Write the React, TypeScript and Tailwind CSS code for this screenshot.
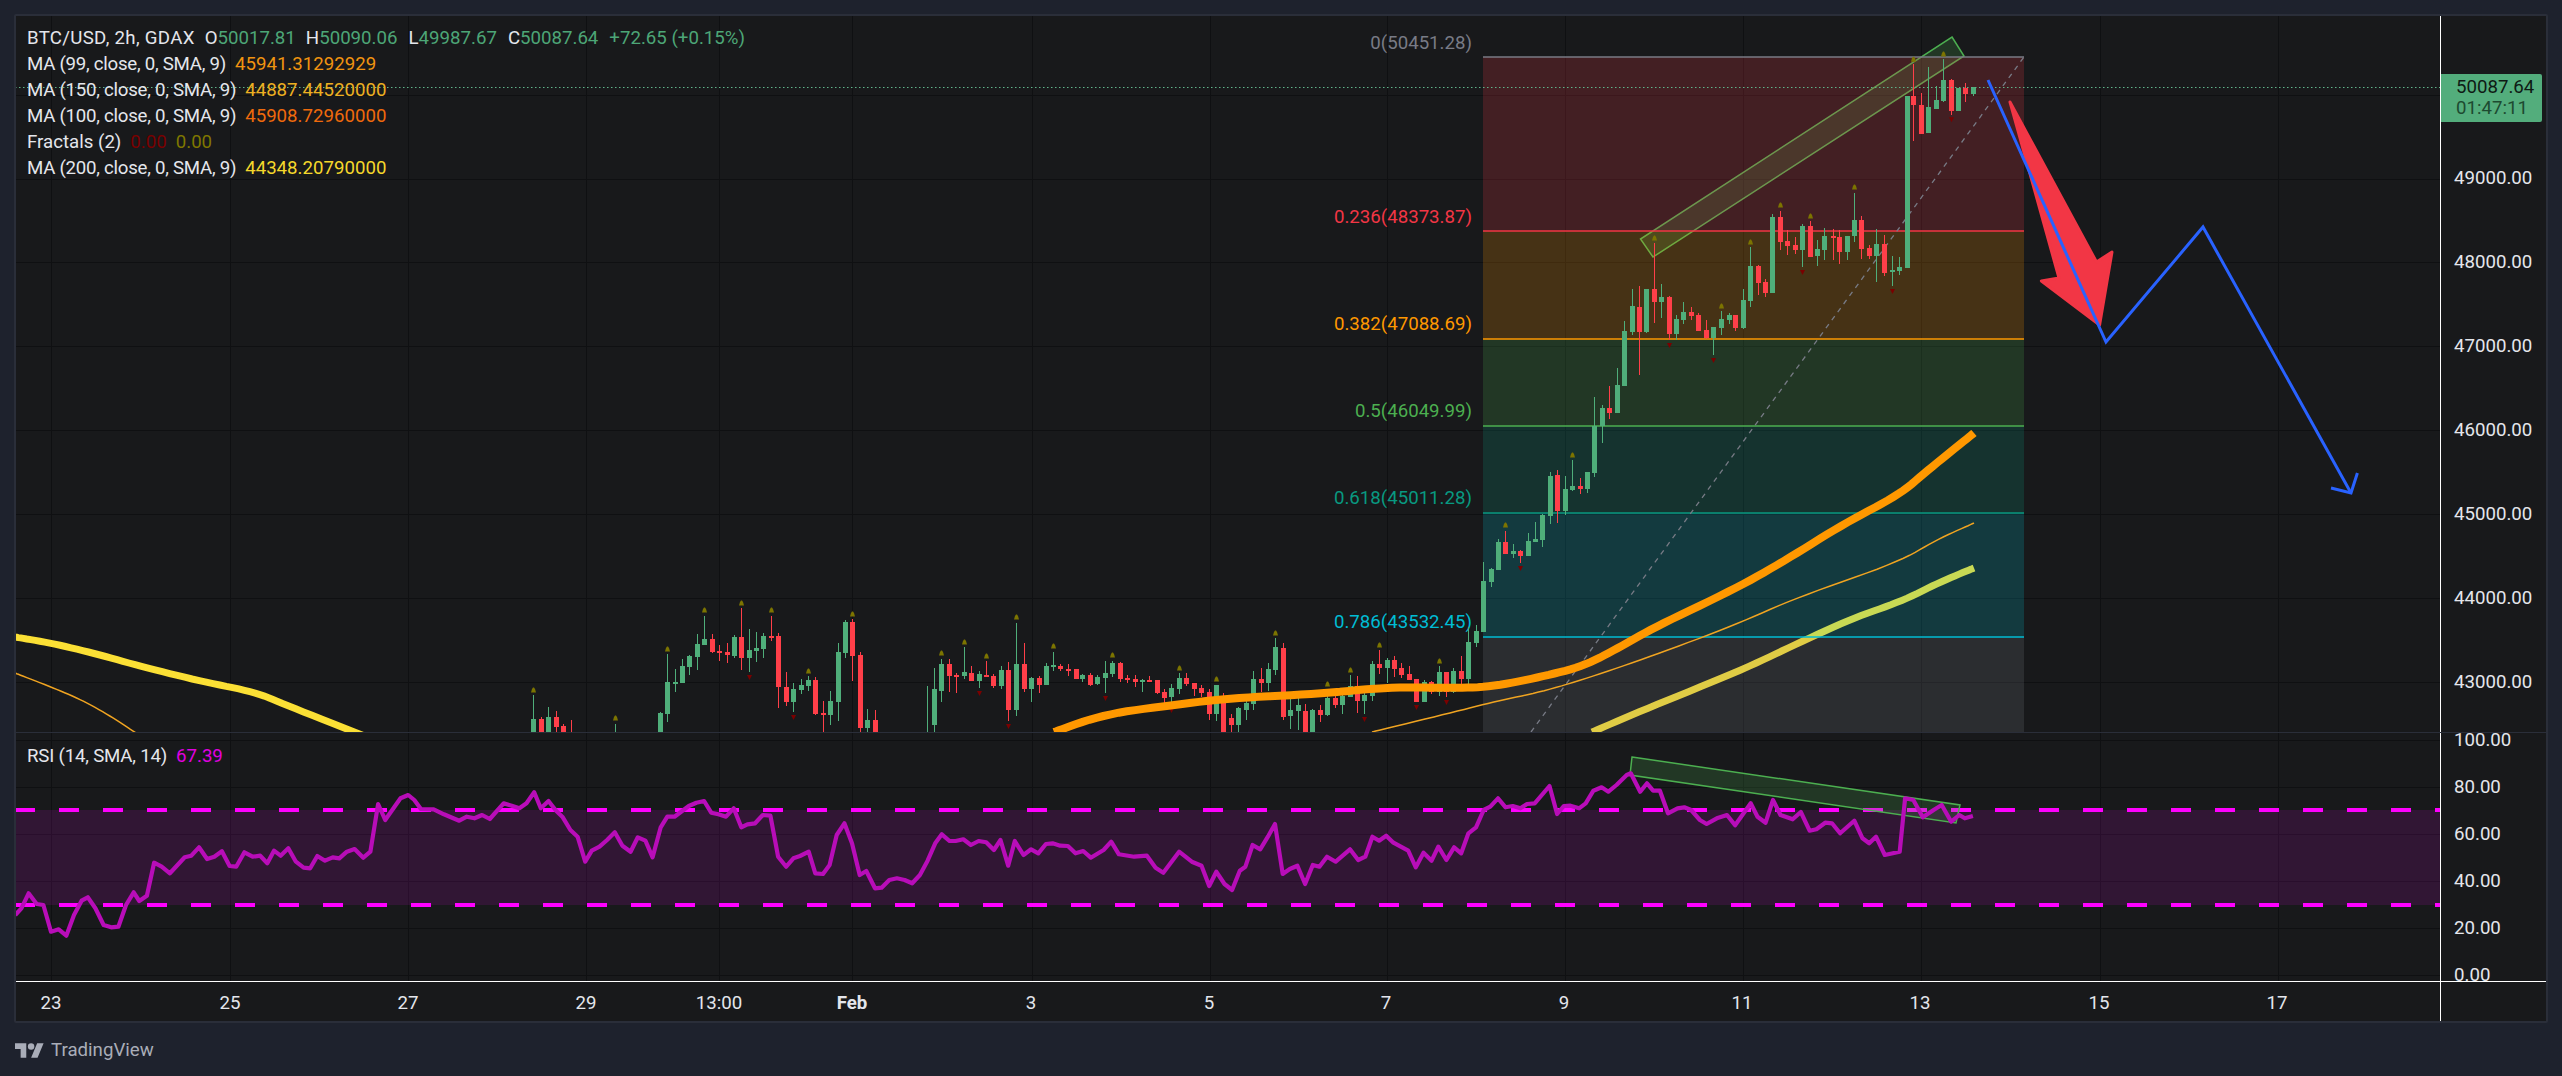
import React from 'react';

// [x, isUp, bodyTop, bodyBottom, wickTop, wickBottom, fractalUpY, fractalDownY]
type Candle = number[];

// candles were read off crops of the chart, each crop has its own scale
const fromCrop = (rows: Candle[], x0: number, sx: number, y0: number, sy: number): Candle[] =>
  rows.map(([x, up, bt, bb, wt, wb, fu = 0, fd = 0]) => [
    Math.round(x0 + x / sx),
    up,
    y0 + bt / sy,
    y0 + bb / sy,
    y0 + wt / sy,
    y0 + wb / sy,
    fu ? y0 + fu / sy : 0,
    fd ? y0 + fd / sy : 0,
  ]);

const candlesA = fromCrop(
  [
    [40, 1, 372, 430, 300, 430, 285], [64, 0, 372, 430, 366, 430], [85, 1, 366, 430, 336, 430],
    [109, 0, 366, 396, 348, 430], [130, 0, 393, 430, 387, 430], [154, 0, 450, 460, 375, 430],
    [286, 1, 450, 460, 387, 430, 369], [421, 1, 354, 430, 351, 430], [442, 1, 261, 357, 177, 381, 162],
    [464, 1, 261, 264, 222, 291], [487, 1, 213, 264, 192, 264], [508, 1, 183, 216, 180, 240],
    [532, 1, 147, 186, 117, 225], [553, 1, 132, 150, 63, 150, 45], [575, 0, 132, 171, 117, 174],
    [598, 0, 168, 174, 150, 198], [620, 0, 171, 180, 144, 204], [643, 1, 126, 183, 120, 189],
    [664, 0, 126, 189, 39, 225, 24], [688, 1, 165, 189, 102, 231, 0, 246], [709, 1, 159, 168, 111, 201],
    [730, 1, 123, 162, 114, 189], [754, 0, 123, 126, 63, 138, 45], [775, 0, 123, 276, 114, 339],
    [799, 0, 276, 321, 231, 333], [820, 1, 282, 321, 264, 351, 0, 366], [844, 1, 270, 285, 252, 297],
    [865, 1, 255, 273, 243, 288, 228], [886, 0, 255, 357, 246, 360], [910, 0, 354, 360, 318, 430],
    [931, 1, 318, 360, 288, 390], [955, 1, 171, 321, 144, 378], [976, 1, 81, 174, 75, 189],
    [997, 0, 81, 183, 72, 258, 57], [1021, 0, 180, 399, 171, 430], [1042, 1, 375, 399, 342, 430],
    [1066, 0, 375, 430, 345, 430], [1222, 1, 450, 460, 273, 430], [1243, 1, 282, 390, 219, 430],
    [1264, 1, 207, 288, 192, 321, 174], [1288, 0, 207, 243, 192, 291], [1309, 0, 240, 243, 234, 294],
    [1333, 1, 231, 243, 156, 252, 141], [1354, 0, 234, 258, 213, 258], [1378, 1, 237, 258, 228, 279, 0, 294],
    [1399, 0, 240, 246, 198, 246, 183], [1420, 0, 243, 273, 237, 279], [1444, 1, 225, 273, 213, 282],
    [1465, 0, 225, 345, 201, 378, 0, 393], [1489, 1, 207, 345, 84, 363, 66],
  ],
  520, 3, 595, 3,
);

const candlesB = fromCrop(
  [
    [41, 0, 207, 282, 144, 291], [64, 1, 249, 282, 246, 321], [86, 0, 249, 270, 243, 294],
    [107, 1, 213, 270, 204, 270], [130, 1, 210, 216, 171, 228, 153], [151, 0, 213, 222, 207, 228],
    [175, 0, 222, 225, 207, 243], [197, 0, 222, 252, 222, 252], [217, 1, 240, 252, 237, 261],
    [241, 0, 240, 270, 234, 273], [262, 1, 246, 267, 240, 270], [286, 1, 234, 249, 198, 294, 0, 309],
    [307, 1, 204, 237, 198, 246, 180], [331, 0, 204, 252, 201, 261], [352, 0, 249, 255, 240, 264],
    [374, 0, 252, 261, 240, 276], [397, 1, 255, 261, 252, 291], [418, 0, 255, 258, 243, 261],
    [442, 0, 255, 294, 255, 297], [463, 0, 291, 309, 282, 327], [484, 1, 279, 306, 267, 324, 0, 345],
    [508, 1, 249, 282, 234, 297, 219], [529, 0, 249, 267, 234, 273], [553, 0, 264, 282, 264, 303],
    [574, 0, 279, 294, 270, 306], [598, 0, 291, 357, 282, 375], [619, 1, 270, 357, 270, 378, 252],
    [640, 0, 321, 430, 294, 430], [664, 0, 369, 390, 357, 430], [685, 1, 339, 390, 336, 430],
    [709, 1, 324, 345, 318, 375], [730, 1, 252, 327, 228, 345], [754, 0, 252, 264, 219, 291],
    [775, 1, 222, 264, 204, 288], [796, 1, 156, 225, 129, 240, 114], [820, 0, 159, 366, 144, 375],
    [841, 1, 345, 363, 312, 402], [865, 1, 330, 348, 306, 405], [886, 0, 348, 430, 327, 430],
    [907, 1, 345, 430, 342, 430], [931, 0, 345, 360, 330, 381], [952, 1, 309, 360, 282, 363, 267],
    [976, 0, 309, 330, 300, 339], [997, 1, 303, 330, 282, 357], [1021, 1, 273, 306, 240, 306, 225],
    [1042, 0, 273, 318, 243, 354], [1063, 1, 300, 318, 279, 357, 0, 372], [1087, 1, 207, 303, 198, 318],
    [1108, 0, 207, 219, 165, 237, 150], [1132, 1, 195, 219, 189, 264], [1153, 0, 195, 222, 183, 246],
    [1174, 0, 219, 240, 204, 249], [1198, 0, 237, 255, 213, 255], [1219, 0, 252, 321, 252, 321, 0, 336],
    [1243, 1, 261, 321, 255, 321], [1264, 0, 261, 291, 258, 297], [1288, 1, 231, 291, 213, 303, 198],
    [1309, 0, 231, 291, 231, 306, 0, 321], [1330, 1, 228, 291, 219, 294], [1354, 0, 228, 252, 183, 273],
    [1375, 1, 141, 252, 96, 267], [1399, 1, 108, 144, 90, 156],
  ],
  1010, 3, 595, 3,
);

const candlesC = fromCrop(
  [
    [130, 1, 543, 696, 486, 696], [154, 1, 507, 546, 504, 561], [175, 1, 426, 510, 417, 510],
    [196, 0, 426, 462, 393, 462, 375], [220, 1, 453, 462, 432, 474], [241, 0, 453, 468, 450, 489, 0, 504],
    [265, 1, 423, 468, 399, 468], [286, 1, 417, 426, 366, 426], [307, 1, 345, 420, 342, 441],
    [331, 1, 228, 348, 216, 372], [352, 0, 225, 333, 210, 369], [376, 1, 267, 333, 228, 345],
    [397, 1, 258, 270, 180, 273, 165], [421, 0, 258, 267, 234, 282], [442, 1, 216, 267, 216, 279],
    [463, 1, 79, 219, -9, 231], [487, 1, 24, 79, 15, 129], [508, 0, 24, 39, -42, 57],
  ],
  1440, 3, 400, 3,
);

const candlesD = fromCrop(
  [
    [423, 1, 1155, 1240, 1104, 1240], [441, 1, 993, 1158, 963, 1158], [460, 1, 918, 995, 867, 1005],
    [479, 0, 921, 996, 858, 1124], [497, 1, 867, 996, 867, 1000], [517, 0, 867, 906, 729, 970, 714],
    [535, 1, 891, 906, 852, 954], [555, 0, 891, 1002, 888, 1020, 0, 1035], [573, 1, 957, 1002, 945, 1020],
    [590, 1, 936, 960, 906, 972], [610, 0, 936, 948, 921, 960], [628, 0, 945, 993, 939, 993],
    [648, 0, 990, 1014, 960, 1017], [666, 1, 981, 1014, 981, 1065, 0, 1080], [686, 1, 957, 984, 933, 1005, 918],
    [705, 1, 945, 960, 939, 972], [722, 0, 945, 984, 945, 993], [742, 1, 900, 984, 867, 987],
    [760, 1, 798, 903, 741, 921, 726], [780, 0, 798, 849, 795, 885], [798, 0, 846, 879, 837, 891],
    [815, 1, 651, 879, 642, 879], [835, 0, 651, 726, 633, 750, 615], [853, 0, 723, 738, 690, 765],
    [873, 0, 735, 750, 711, 762], [891, 1, 678, 750, 672, 801, 0, 816], [911, 0, 678, 771, 663, 771, 648],
    [929, 1, 747, 768, 720, 798], [947, 1, 708, 750, 684, 780], [968, 0, 708, 714, 687, 780],
    [985, 0, 711, 756, 690, 792], [1005, 1, 708, 756, 708, 780], [1023, 1, 660, 708, 579, 726, 561],
    [1041, 0, 660, 747, 648, 777], [1060, 0, 744, 768, 735, 777], [1078, 1, 732, 768, 687, 846],
    [1099, 0, 732, 819, 705, 828], [1117, 1, 810, 816, 768, 858, 0, 873], [1136, 1, 801, 813, 771, 825],
    [1155, 1, 288, 804, 288, 804], [1172, 0, 288, 315, 192, 423, 178], [1192, 0, 315, 402, 279, 402],
    [1210, 1, 321, 399, 201, 399], [1230, 1, 300, 327, 258, 327], [1248, 1, 240, 303, 177, 306, 162],
    [1268, 0, 240, 333, 237, 345, 0, 358], [1286, 1, 264, 333, 264, 333], [1303, 0, 264, 282, 249, 306],
    [1324, 1, 261, 282, 261, 288],
  ],
  1450, 2.53, 0, 3,
);

const candles = [...candlesA, ...candlesB, ...candlesC, ...candlesD];

const gridX = [51, 230, 408, 586, 719, 852, 1032, 1210, 1387, 1565, 1743, 1921, 2100, 2278];
const gridY = [95, 179, 262, 346, 430, 514, 598, 682];
const rsiGridY = [740, 787, 834, 881, 928, 975];

const fib = [
  { top: 57, bottom: 231, color: '#787b86', fill: '#f23645', label: '0(50451.28)', labelY: 43 },
  { top: 231, bottom: 339, color: '#f23645', fill: '#ff9800', label: '0.236(48373.87)', labelY: 217 },
  { top: 339, bottom: 426, color: '#ff9800', fill: '#4caf50', label: '0.382(47088.69)', labelY: 324 },
  { top: 426, bottom: 513, color: '#4caf50', fill: '#089981', label: '0.5(46049.99)', labelY: 411 },
  { top: 513, bottom: 637, color: '#089981', fill: '#00bcd4', label: '0.618(45011.28)', labelY: 498 },
  { top: 637, bottom: 740, color: '#00bcd4', fill: '#787b86', label: '0.786(43532.45)', labelY: 622 },
];

// corner cutting so the moving averages don't look like straight segments
const smooth = (line: string, rounds = 3) => {
  let pts = line.split(' ').map((p) => p.split(',').map(Number));
  for (let r = 0; r < rounds; r++) {
    const next = [pts[0]];
    for (let i = 0; i < pts.length - 1; i++) {
      const [a, b] = [pts[i], pts[i + 1]];
      next.push([a[0] * 0.75 + b[0] * 0.25, a[1] * 0.75 + b[1] * 0.25]);
      next.push([a[0] * 0.25 + b[0] * 0.75, a[1] * 0.25 + b[1] * 0.75]);
    }
    next.push(pts[pts.length - 1]);
    pts = next;
  }
  return pts.map((p) => p.map((n) => n.toFixed(1)).join(',')).join(' ');
};

const ma99 = smooth(
  '1054,732 1105,714 1174,705 1231,698 1318,694 1389,687 1450,688 1490,687 1541,677 1584,666 1620,647 1655,627 1735,589 1786,560 1845,523 1899,495 1928,470 1974,433',
);
const ma150 = smooth(
  '1372,732 1450,713 1497,701 1541,692 1588,678 1652,656 1735,625 1798,597 1899,562 1936,540 1974,523',
);
const ma200Right = smooth('1592,732 1648,708 1742,670 1790,647 1853,618 1900,602 1940,582 1974,568');
const ma200Left = smooth('15,637 51,643 97,654 143,667 204,682 255,692 286,705 367,737');
const ma150Left = smooth('15,673 51,687 82,700 112,717 139,735');

const toPoints = (rows: number[][], x0: number, sx: number, y0: number) =>
  rows.map(([x, y]) => `${(x0 + x / sx).toFixed(1)},${(y0 + y / 3).toFixed(1)}`).join(' ');

const rsiPoints = [
  toPoints(
    [
      [30, 585], [42, 565], [56, 520], [72, 552], [85, 555], [100, 635], [115, 628], [130, 647], [145, 585], [160, 542],
      [172, 532], [187, 565], [203, 615], [218, 622], [232, 620], [247, 555], [262, 517], [273, 543], [288, 527], [302, 428],
      [317, 440], [333, 460], [362, 412], [375, 407], [390, 382], [406, 417], [420, 410], [435, 394], [450, 438], [463, 440],
      [479, 397], [495, 410], [510, 407], [524, 430], [537, 392], [550, 407], [565, 385], [580, 425], [595, 443], [608, 445],
      [622, 408], [637, 422], [652, 412], [665, 415], [680, 395], [695, 387], [712, 413], [726, 395], [741, 252], [755, 300],
      [785, 235], [800, 225], [812, 240], [825, 267], [850, 268], [870, 283], [900, 302], [915, 290], [930, 295], [945, 285],
      [960, 297], [987, 250], [1003, 257], [1018, 265], [1032, 250], [1047, 217], [1060, 265], [1075, 243], [1090, 272], [1103, 292],
      [1118, 330], [1132, 350], [1147, 425], [1160, 392], [1175, 380], [1190, 360], [1205, 337], [1220, 377], [1236, 395], [1250, 352],
      [1265, 362], [1279, 412], [1295, 322], [1308, 290], [1322, 290], [1350, 258], [1365, 248], [1380, 243], [1394, 278], [1408, 283],
      [1423, 290], [1438, 265], [1453, 322], [1465, 313], [1480, 310], [1495, 285], [1510, 287], [1525, 410], [1541, 440], [1555, 415],
    ],
    0, 1.96, 720,
  ),
  toPoints(
    [
      [0, 408], [17, 395], [30, 460], [45, 462], [58, 435], [72, 345], [87, 310], [102, 370], [117, 465], [130, 453],
      [147, 505], [160, 503], [175, 480], [190, 475], [205, 480], [220, 490], [235, 465], [250, 422], [265, 370], [278, 343],
      [293, 363], [305, 363], [320, 358], [335, 375], [350, 363], [365, 367], [380, 390], [393, 360], [408, 437], [421, 363],
      [438, 405], [453, 388], [467, 400], [482, 372], [495, 370], [510, 377], [525, 378], [540, 400], [555, 393], [570, 413],
      [595, 390], [610, 365], [625, 403], [655, 410], [680, 407], [697, 443], [712, 458], [743, 395], [768, 425], [787, 437],
      [802, 498], [816, 455], [832, 492], [847, 510], [862, 452], [873, 440], [887, 375], [902, 388], [917, 350], [931, 312],
      [946, 462], [960, 447], [975, 437], [990, 492], [1005, 435], [1018, 440], [1033, 410], [1050, 425], [1078, 388], [1094, 420],
      [1108, 410], [1122, 350], [1135, 362], [1149, 347], [1163, 368], [1192, 392], [1207, 442], [1222, 398], [1238, 422], [1251, 380],
      [1267, 420], [1282, 382], [1296, 400], [1310, 340], [1325, 322], [1340, 270], [1353, 260], [1368, 235], [1383, 262], [1397, 258],
      [1412, 265], [1425, 252], [1440, 250], [1469, 198], [1484, 282], [1497, 258], [1510, 257], [1527, 265], [1540, 250], [1555, 212],
    ],
    800, 1.96, 720,
  ),
  toPoints(
    [
      [150, 262], [160, 275], [172, 255], [187, 225], [193, 220], [207, 275], [217, 250], [226, 272], [236, 272], [248, 340],
      [262, 325], [272, 322], [282, 330], [295, 360], [305, 372], [320, 355], [335, 345], [347, 376], [370, 310], [380, 350],
      [392, 368], [403, 300], [414, 345], [432, 358], [444, 336], [457, 392], [467, 388], [480, 368], [490, 370], [502, 400],
      [523, 362], [535, 415], [545, 430], [555, 410], [568, 465], [590, 455], [598, 295], [610, 300], [624, 352], [640, 330],
      [652, 315], [666, 365], [678, 345], [686, 355], [698, 348],
    ],
    1500, 1.476, 700,
  ),
].join(' ');

const timeLabels = [
  { text: '23', x: 51 }, { text: '25', x: 230 }, { text: '27', x: 408 }, { text: '29', x: 586 },
  { text: '13:00', x: 719 }, { text: 'Feb', x: 852, bold: true }, { text: '3', x: 1031 }, { text: '5', x: 1209 },
  { text: '7', x: 1386 }, { text: '9', x: 1564 }, { text: '11', x: 1742 }, { text: '13', x: 1920 },
  { text: '15', x: 2099 }, { text: '17', x: 2277 },
];

const maLegend = [
  { name: 'MA (99, close, 0, SMA, 9)', value: '45941.31292929', color: 'text-[#f09410]' },
  { name: 'MA (150, close, 0, SMA, 9)', value: '44887.44520000', color: 'text-[#edb021]' },
  { name: 'MA (100, close, 0, SMA, 9)', value: '45908.72960000', color: 'text-[#ef6a0c]' },
];

function GridLines({ ys, y1, y2 }: { ys: number[]; y1: number; y2: number }) {
  return (
    <g stroke="#0f1012" strokeWidth="1" shapeRendering="crispEdges">
      {gridX.map((x) => (
        <line key={x} x1={x} x2={x} y1={y1} y2={y2} />
      ))}
      {ys.map((y) => (
        <line key={y} x1={15} x2={2440} y1={y} y2={y} />
      ))}
    </g>
  );
}

function Candles() {
  return (
    <g>
      {candles.map(([x, up, bt, bb, wt, wb, fu, fd], i) => {
        const color = up ? '#4fae7a' : '#ff3f49';
        return (
          <g key={i} fill={color}>
            <rect x={x} y={wt} width="1" height={wb - wt} shapeRendering="crispEdges" />
            <rect x={x - 2} y={bt} width="5" height={Math.max(bb - bt, 1.5)} shapeRendering="crispEdges" />
            {fu > 0 && <path d={`M${x - 2} ${fu + 2.5}h5l-1-3.5-1-1.5h-1l-1 1.5z`} fill="#7c7400" />}
            {fd > 0 && <path d={`M${x - 2} ${fd - 2}h5l-2.5 5z`} fill="#7a0000" />}
          </g>
        );
      })}
    </g>
  );
}

function MainChart() {
  return (
    <svg width="2424" height="716" viewBox="16 16 2424 716" className="block">
      <GridLines ys={gridY} y1={16} y2={732} />
      <polyline points={ma200Left} fill="none" stroke="#fbe035" strokeWidth="7" />
      <polyline points={ma150Left} fill="none" stroke="#f0a421" strokeWidth="1.5" />
      <polyline points={ma200Right} fill="none" stroke="#fbe035" strokeWidth="7" />
      <polygon
        points="1952,37 1964,56 1653,257 1640.5,239"
        fill="#4caf50"
        fillOpacity="0.2"
        stroke="#4caf50"
        strokeWidth="1.5"
      />
      {fib.map((f) => (
        <g key={f.label}>
          <rect x="1483" y={f.top} width="541" height={f.bottom - f.top} fill={f.fill} fillOpacity="0.2" />
          <line x1="1483" x2="2024" y1={f.top} y2={f.top} stroke={f.color} strokeWidth="1.5" />
          <text x="1472" y={f.labelY + 6} textAnchor="end" fontSize="18.67" fill={f.color}>
            {f.label}
          </text>
        </g>
      ))}
      <line x1="1531" y1="732" x2="2024" y2="57" stroke="#787b86" strokeWidth="1.3" strokeDasharray="5 5" />
      <Candles />
      <polyline points={ma150} fill="none" stroke="#f0a421" strokeWidth="1.5" />
      <polyline points={ma99} fill="none" stroke="#ff9800" strokeWidth="8" />
      <line x1="15" x2="2440" y1="87.5" y2="87.5" stroke="#5fb48a" strokeWidth="1" strokeDasharray="1.5 2.5" />
      <path
        d="M2010 102 L2096.5 262 L2112 252 L2099.6 325 L2041.4 281 L2059 278 Z"
        fill="#f23645"
        stroke="#f23645"
        strokeWidth="3"
        strokeLinejoin="round"
      />
      <polyline
        points="1988,80 2106,342 2203,227 2351,493"
        fill="none"
        stroke="#2962ff"
        strokeWidth="3"
        strokeLinejoin="miter"
      />
      <polyline points="2331,488 2351,493 2357.4,473" fill="none" stroke="#2962ff" strokeWidth="3" />
    </svg>
  );
}

function RsiChart() {
  return (
    <svg width="2424" height="248" viewBox="16 733 2424 248" className="block">
      <GridLines ys={rsiGridY} y1={733} y2={981} />
      <rect x="15" y="810" width="2425" height="95" fill="#ff00ff" fillOpacity="0.11" />
      <line x1="15" x2="2440" y1="810" y2="810" stroke="#ff00ff" strokeWidth="4" strokeDasharray="20 24" />
      <line x1="15" x2="2440" y1="905" y2="905" stroke="#ff00ff" strokeWidth="4" strokeDasharray="20 24" />
      <polygon
        points="1632,757 1960,805 1956,823 1630,775"
        fill="#4caf50"
        fillOpacity="0.2"
        stroke="#4caf50"
        strokeWidth="1.5"
      />
      <polyline points={rsiPoints} fill="none" stroke="#b80db8" strokeWidth="4.2" strokeLinejoin="round" />
    </svg>
  );
}

function PriceTag() {
  return (
    <div className="absolute left-0 top-[58px] flex h-[48px] w-[101px] flex-col rounded-r-[2px] bg-[#53ad7c] pl-[15px] leading-[21px]">
      <span className="mt-[3px] text-[#0e1a14]">50087.64</span>
      <span className="text-[#1d4a30]">01:47:11</span>
    </div>
  );
}

export default function App() {
  return (
    <div className="flex h-[1076px] w-[2562px] flex-col overflow-hidden bg-[#1e222d] px-[14px] pt-[14px] text-[18.67px] [font-family:Roboto,'Liberation_Sans',sans-serif]">
      <div className="flex h-[1009px] w-[2534px] flex-col rounded-[2px] border-2 border-[#2a2e39] bg-[#18191b] text-[#e4e6ec]">
        {/* price pane */}
        <div className="flex h-[716px]">
          <div className="relative w-[2424px]">
            <MainChart />
            <div className="absolute left-[11px] top-[9px] flex flex-col leading-[26px]">
              <div className="flex">
                <span className="tracking-[0.3px]">BTC/USD, 2h, GDAX</span>
                <span className="ml-[10px]">O</span>
                <span className="text-[#4da677]">50017.81</span>
                <span className="ml-[10px]">H</span>
                <span className="text-[#4da677]">50090.06</span>
                <span className="ml-[11px]">L</span>
                <span className="text-[#4da677]">49987.67</span>
                <span className="ml-[11px]">C</span>
                <span className="text-[#4da677]">50087.64</span>
                <span className="ml-[11px] text-[#4da677]">+72.65 (+0.15%)</span>
              </div>
              {maLegend.map((m) => (
                <div key={m.name} className="flex gap-[9px]">
                  <span className="tracking-[-0.26px]">{m.name}</span>
                  <span className={m.color}>{m.value}</span>
                </div>
              ))}
              <div className="flex gap-[9px]">
                <span>Fractals (2)</span>
                <span className="text-[#7a0000]">0.00</span>
                <span className="text-[#7f7700]">0.00</span>
              </div>
              <div className="flex gap-[9px]">
                <span className="tracking-[-0.26px]">MA (200, close, 0, SMA, 9)</span>
                <span className="text-[#f5d82b]">44348.20790000</span>
              </div>
            </div>
          </div>
          <div className="relative flex w-[106px] flex-col border-l border-white pl-[13px] pt-[120px]">
            {['49000.00', '48000.00', '47000.00', '46000.00', '45000.00', '44000.00', '43000.00'].map((p) => (
              <div key={p} className="flex h-[84px] shrink-0 items-center">
                {p}
              </div>
            ))}
            <PriceTag />
          </div>
        </div>

        {/* rsi pane */}
        <div className="flex h-[249px] border-t border-[#2a2e39]">
          <div className="relative w-[2424px]">
            <RsiChart />
            <div className="absolute left-[11px] top-[10px] flex gap-[9px] leading-[26px]">
              <span className="tracking-[-0.2px]">RSI (14, SMA, 14)</span>
              <span className="text-[#e000e0]">67.39</span>
            </div>
          </div>
          <div className="flex w-[106px] flex-col gap-[33px] border-l border-white pl-[13px] leading-[14px]">
            {['100.00', '80.00', '60.00', '40.00', '20.00', '0.00'].map((p) => (
              <div key={p} className="h-[14px] shrink-0">
                {p}
              </div>
            ))}
          </div>
        </div>

        {/* time axis */}
        <div className="flex flex-1 border-t border-white">
          <div className="relative w-[2424px]">
            {timeLabels.map((t) => (
              <span
                key={t.text + t.x}
                className={t.bold ? 'absolute top-[9px] -translate-x-1/2 font-bold leading-[24px]' : 'absolute top-[9px] -translate-x-1/2 leading-[24px]'}
                style={{ left: t.x - 16 }}
              >
                {t.text}
              </span>
            ))}
          </div>
          <div className="w-[106px] border-l border-white" />
        </div>
      </div>

      <div className="ml-px mt-[15px] flex items-center gap-[7px] text-[18.67px] leading-[24px] text-[#a9adb8]">
        <svg width="29" height="15" viewBox="0 4 36 18" fill="currentColor">
          <path d="M14 22H7V11H0V4h14v18zM28 22h-8l7.5-18h8L28 22z" />
          <circle cx="20" cy="8" r="4" />
        </svg>
        <span>TradingView</span>
      </div>
    </div>
  );
}
